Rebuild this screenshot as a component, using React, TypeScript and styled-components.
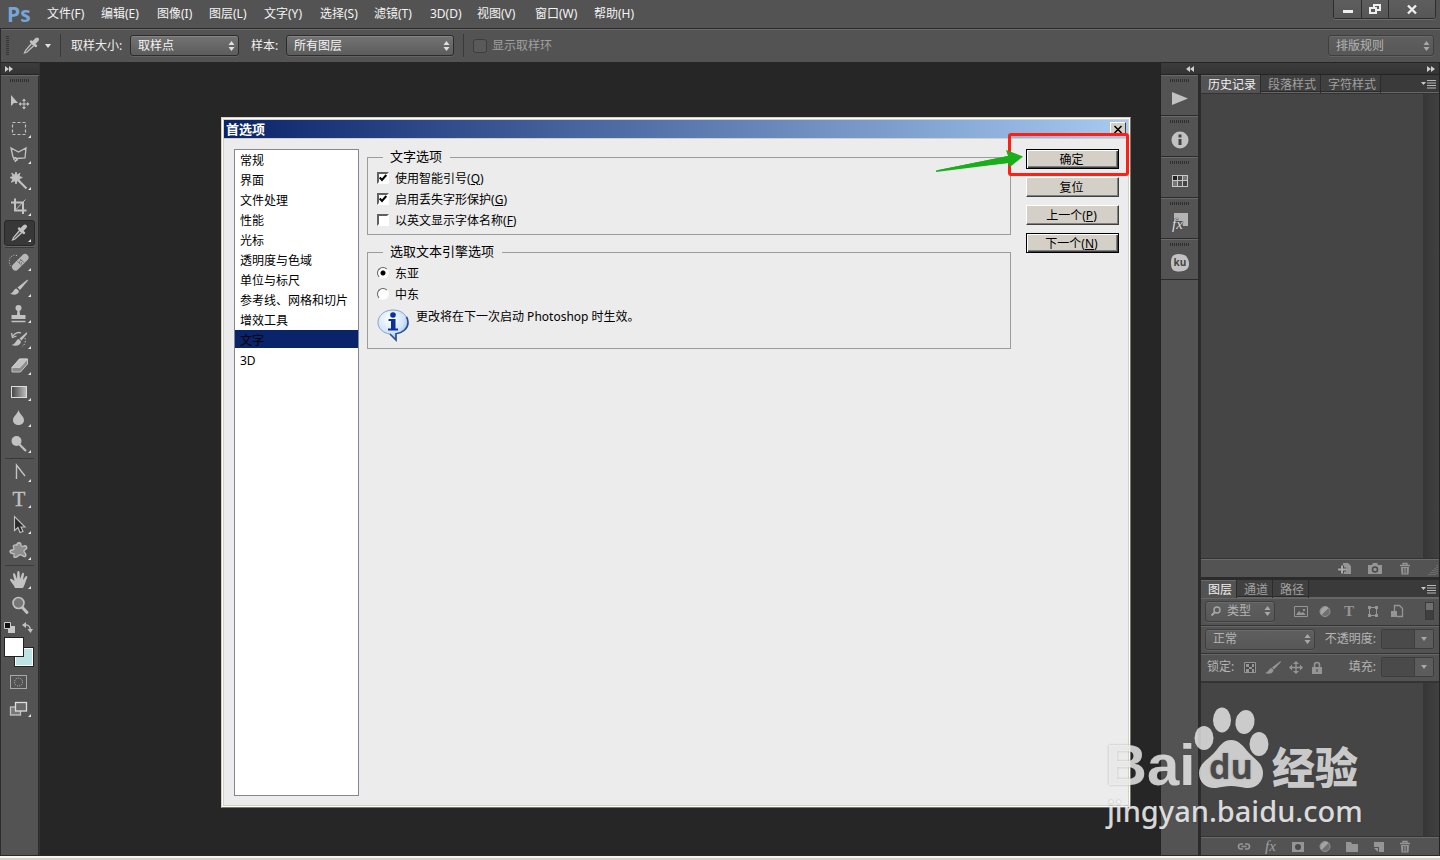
import React from "react";
import styled, { createGlobalStyle, css } from "styled-components";

const UI_FONT = '"Noto Sans", "Noto Sans CJK SC", sans-serif';

const GlobalStyle = createGlobalStyle`
  * { box-sizing: border-box; }
  body { margin: 0; background: #262626; font: 12px/16px ${UI_FONT}; }
  button, select, input { font: inherit; margin: 0; }
  svg { display: block; overflow: visible; }
  ul { list-style: none; margin: 0; padding: 0; }
`;

/* ---------- frame ---------- */
const Frame = styled.div`
  position: relative;
  display: flex;
  flex-direction: column;
  min-height: 100vh;
  color: #f0f0f0;
  background: #262626;
`;
const Bar = styled.header`
  display: flex;
  align-items: center;
  background: #535353;
`;
const MenuBar = styled(Bar)`
  height: 28px;
  padding: 0 4px 0 7px;
`;
const Logo = styled.span`
  width: 40px;
  font: bold 21px/24px "Open Sans", sans-serif;
  color: #77a5d8;
`;
const Menus = styled.nav`
  flex: 1;
  display: grid;
  grid-template-columns: 54px 56px 52px 55px 56px 54px 56px 47px 58px 59px 60px;
`;
const MenuButton = styled.button`
  padding: 0;
  border: 0;
  background: none;
  color: #f4f4f4;
  text-align: left;
  white-space: nowrap;
`;
const WindowButtons = styled.div`
  align-self: flex-start;
  display: flex;
  border: 1px solid #2d2d2d;
  border-top: 0;
  border-radius: 0 0 3px 3px;
  box-shadow: 0 1px 0 #6c6c6c;
`;
const WindowButton = styled.button<{ $width: number }>`
  display: flex;
  align-items: center;
  justify-content: center;
  width: ${(p) => p.$width}px;
  height: 18px;
  padding: 0;
  border: 0;
  border-left: 1px solid #2d2d2d;
  background: linear-gradient(#5e5e5e, #565656);
  &:first-child { border-left: 0; }
`;
const OptionsBar = styled(Bar)`
  height: 34px;
  padding: 0 6px 0 5px;
  border-top: 1px solid #2b2b2b;
  border-left: 1px solid #2b2b2b;
  box-shadow: inset 0 1px 0 #6a6a6a;
`;
const VerticalGrip = styled.i`
  width: 3px;
  height: 20px;
  margin-right: 10px;
  background: repeating-linear-gradient(#333 0 1px, transparent 1px 2px);
`;
const IconButton = styled.button`
  display: flex;
  align-items: center;
  justify-content: center;
  padding: 0;
  border: 0;
  background: none;
`;
const Divider = styled.i`
  width: 1px;
  height: 23px;
  margin: 0 9px;
  background: #3a3a3a;
`;
const OptionLabel = styled.label`
  margin: 0 4px 0 1px;
  min-width: 55px;
`;
const ShortLabel = styled(OptionLabel)`
  min-width: 31px;
  margin-left: 12px;
`;
const CheckOption = styled.label`
  display: flex;
  align-items: center;
  gap: 5px;
  color: #a0a0a0;
`;
const DarkCheck = styled.input`
  appearance: none;
  width: 14px;
  height: 14px;
  border: 1px solid #3d3d3d;
  border-radius: 3px;
  background: #5a5a5a;
`;
const Spacer = styled.span`
  flex: 1;
`;
const SelectBox = styled.span<{ $width: number; $dim?: boolean; $icon?: boolean }>`
  display: grid;
  width: ${(p) => p.$width}px;
  height: 21px;
  align-items: center;
  color: ${(p) => (p.$dim ? "#b4b4b4" : "#f4f4f4")};
  > * { grid-area: 1 / 1; }
  > svg:last-child { justify-self: end; margin-right: 4px; pointer-events: none; }
  > svg:first-of-type:not(:last-child) { margin-left: 6px; z-index: 1; }
  select {
    appearance: none;
    width: 100%;
    height: 21px;
    padding: 0 16px 0 ${(p) => (p.$icon ? 21 : 7)}px;
    border: 1px solid ${(p) => (p.$dim ? "#3f3f3f" : "#2c2c2c")};
    border-radius: 3px;
    background: ${(p) =>
      p.$dim ? "linear-gradient(#5f5f5f, #575757)" : "linear-gradient(#737373, #5c5c5c)"};
    box-shadow: inset 0 1px 0 ${(p) => (p.$dim ? "#6a6a6a" : "#858585")}, 0 1px 0 #626262;
    color: inherit;
  }
`;

/* ---------- workspace ---------- */
const Workspace = styled.div`
  flex: 1;
  display: flex;
`;
const CollapseStrip = styled.div`
  display: flex;
  align-items: center;
  justify-content: space-between;
  height: 13px;
  padding: 0 4px;
  border: solid #242424;
  border-width: 1px 0;
  background: linear-gradient(#3c3c3c, #343434);
`;
const ToolColumn = styled.aside`
  width: 40px;
  border-left: 1px solid #2b2b2b;
  border-right: 1px solid #343434;
  background: #535353;
  box-shadow: inset -1px 0 0 #2b2b2b;
`;
const Grip = styled.i`
  display: block;
  width: 20px;
  height: 3px;
  margin: 0 auto;
  background: repeating-linear-gradient(90deg, #2f2f2f 0 1px, transparent 1px 2px);
`;
const ToolGrip = styled.div`
  height: 15px;
  padding-top: 4px;
  padding-right: 1px;
  box-shadow: inset 0 1px 0 #6a6a6a;
`;
const ToolButton = styled.button<{ $active?: boolean }>`
  display: block;
  width: 31px;
  height: 26px;
  margin-left: 3px;
  padding: 1px 0 1px 2px;
  border: 1px solid transparent;
  border-radius: 3px;
  background: none;
  ${(p) =>
    p.$active &&
    css`
      border-color: #282828;
      background: #383838;
      box-shadow: 0 1px 0 #666;
    `}
`;
const ToolRule = styled.i`
  display: block;
  height: 1px;
  margin: 1px 5px 1px 4px;
  background: #3a3a3a;
`;
const SwatchRow = styled.div`
  display: flex;
  justify-content: space-between;
  padding: 3px 6px 0 3px;
`;
const Swatches = styled.div`
  display: grid;
  grid-template: repeat(3, 10px) / 10px 10px 10px;
  margin: 4px 0 2px 3px;
`;
const Swatch = styled.button<{ $color: string; $back?: boolean }>`
  grid-area: ${(p) => (p.$back ? "2 / 2 / 4 / 4" : "1 / 1 / 3 / 3")};
  z-index: ${(p) => (p.$back ? 0 : 1)};
  padding: 0;
  border: 1px solid #222;
  background: ${(p) => p.$color};
  box-shadow: inset 0 0 0 1px #fff;
`;
const Canvas = styled.main`
  flex: 1;
  display: flex;
  padding: 55px 29px 47px 181px;
  background: #262626;
`;
const StatusEdge = styled.footer`
  height: 5px;
  border-top: 1px solid #2a2a2a;
  background: linear-gradient(#f8f6f0 0 2px, #d4d0c8 2px);
`;

/* ---------- preferences dialog ---------- */
const Dialog = styled.section`
  position: relative;
  flex: 1;
  display: flex;
  flex-direction: column;
  padding: 1px;
  border: 1px solid #d4d0c8;
  border-right-color: #77776c;
  border-bottom-color: #77776c;
  background: #ececec;
  box-shadow: inset 0 0 0 1px #fff, inset 0 0 0 2px #d4d0c8;
  color: #000;
`;
const TitleBar = styled.div`
  display: flex;
  align-items: center;
  justify-content: space-between;
  height: 18px;
  margin: 1px;
  padding: 0 2px;
  background: linear-gradient(90deg, #0a246a, #a6caf0);
  box-shadow: 0 1px 0 #d4d0c8;
`;
const Title = styled.h1`
  margin: 0;
  font-size: 13px;
  line-height: 18px;
  color: #fff;
`;
const CloseButton = styled.button`
  display: flex;
  align-items: center;
  justify-content: center;
  width: 16px;
  height: 14px;
  padding: 0;
  border: 1px solid;
  border-color: #fff #404040 #404040 #fff;
  background: #d4d0c8;
`;
const DialogBody = styled.div`
  flex: 1;
  display: flex;
  padding: 10px 10px 10px 11px;
`;
const CategoryList = styled.ul`
  && { margin-right: 8px; }
  width: 125px;
  border: 1px solid #828790;
  background: #fff;
`;
const Category = styled.li<{ $selected?: boolean }>`
  height: 18px;
  margin-bottom: 2px;
  padding-left: 5px;
  line-height: 22px;
  background: ${(p) => (p.$selected ? "#0a246a" : "transparent")};
`;
const Settings = styled.div`
  flex: 1;
`;
const Group = styled.fieldset`
  margin: 0 0 9px;
  padding: 3px 9px 3px;
  border: 1px solid #9c9c9c;
`;
const GroupTitle = styled.legend`
  margin-left: 6px;
  padding: 0 8px 2px 7px;
  font-size: 13px;
  line-height: 14px;
`;
const Choice = styled.label`
  display: flex;
  align-items: center;
  gap: 6px;
  height: 21px;
  u { text-underline-offset: 1px; }
  > input, > span:first-child:not(:last-child) { margin-bottom: 2px; }
`;
const CheckMark = styled.input`
  appearance: none;
  width: 12px;
  height: 12px;
  border: 2px solid;
  border-color: #606060 #fff #fff #606060;
  background: #fff;
`;
const CheckCell = styled.span`
  display: grid;
  place-items: center;
  > * { grid-area: 1 / 1; }
  svg { pointer-events: none; }
`;
const Radio = styled.input`
  appearance: none;
  width: 12px;
  height: 12px;
  border: 1px solid;
  border-color: #606060 #fafafa #fafafa #606060;
  border-radius: 50%;
  background: #fff;
  &:checked { background: radial-gradient(circle, #000 0 2px, #fff 3px); }
`;
const Notice = styled.p`
  display: flex;
  gap: 7px;
  margin: 0;
  padding: 4px 0;
  line-height: 16px;
`;
const ActionColumn = styled.div`
  display: flex;
  flex-direction: column;
  gap: 8px;
  width: 93px;
  margin-left: 15px;
`;
const ActionButton = styled.button<{ $strong?: boolean }>`
  height: 20px;
  padding: 1px 2px 0 0;
  border: 1px solid;
  border-color: ${(p) => (p.$strong ? "#000" : "#fff #404040 #404040 #fff")};
  background: #d4d0c8;
  box-shadow: ${(p) =>
    p.$strong ? "inset 1px 1px 0 #fff, inset -1px -1px 0 #404040, inset -2px -2px 0 #808080" : "inset -1px -1px 0 #808080"};
  color: #000;
  line-height: 18px;
`;
const CalloutBox = styled.div`
  position: absolute;
  top: 15px;
  right: 1px;
  width: 121px;
  height: 43px;
  border: 3px solid #ff2013;
  border-radius: 3px;
  pointer-events: none;
`;
const CalloutArrow = styled.svg`
  position: absolute;
  top: 30px;
  right: 105px;
  pointer-events: none;
`;

/* ---------- right docks ---------- */
const RightArea = styled.aside`
  display: flex;
  flex-direction: column;
  width: 280px;
  border: solid #242424;
  border-width: 0 1px;
  background: #535353;
`;
const RightStrip = styled(CollapseStrip)`
  padding: 0 4px 0 25px;
`;
const DockRow = styled.div`
  flex: 1;
  display: flex;
`;
const IconDock = styled.div`
  width: 40px;
  border-right: 3px solid #2b2b2b;
  background: #535353;
`;
const DockButton = styled.button`
  display: flex;
  flex-direction: column;
  align-items: center;
  width: 100%;
  height: 41px;
  padding: 4px 0 0;
  border: 0;
  border-bottom: 1px solid #2b2b2b;
  background: none;
  box-shadow: inset 0 1px 0 #6a6a6a;
`;
const DockIcon = styled.span`
  flex: 1;
  display: flex;
  align-items: center;
`;
const Panels = styled.div`
  flex: 1;
  display: flex;
  flex-direction: column;
`;
const Tabs = styled.div`
  display: flex;
  height: 18px;
  background: #3a3a3a;
  box-shadow: inset 0 -1px 0 #666;
`;
const Tab = styled.button<{ $active?: boolean }>`
  padding: 1px 4px 0 7px;
  border: 0;
  border-right: 1px solid #2b2b2b;
  background: ${(p) => (p.$active ? "#535353" : "#404040")};
  box-shadow: ${(p) => (p.$active ? "inset 0 1px 0 #6a6a6a" : "inset 0 -1px 0 #666, inset 0 -2px 0 #2b2b2b")};
  color: ${(p) => (p.$active ? "#f0f0f0" : "#a0a0a0")};
  white-space: nowrap;
`;
const PanelMenu = styled(IconButton)`
  margin-left: auto;
  padding-right: 3px;
`;
const ListArea = styled.div<{ $height?: number }>`
  flex: ${(p) => (p.$height ? `0 0 ${p.$height}px` : "1")};
  border-top: 1px solid #333;
  border-bottom: 1px solid #333;
  background: linear-gradient(90deg, #363636, #414141) right / 16px 100% no-repeat #454545;
`;
const PanelFooter = styled.div<{ $pad: number; $gap: number }>`
  display: flex;
  align-items: center;
  justify-content: flex-end;
  gap: ${(p) => p.$gap}px;
  height: 18px;
  padding: 1px ${(p) => p.$pad}px 0 0;
  box-shadow: inset 0 1px 0 #6a6a6a;
`;
const PanelGap = styled.div`
  height: 3px;
  background: #2b2b2b;
`;
const LayerRow = styled.div`
  display: flex;
  align-items: center;
  height: 28px;
  padding: 0 5px 1px 4px;
  border-bottom: 1px solid #343434;
  box-shadow: inset 0 1px 0 #666;
  color: #b4b4b4;
`;
const LockLabel = styled.span`
  padding-left: 2px;
`;
const RowIcons = styled.div<{ $gap: number; $left: number }>`
  display: flex;
  align-items: center;
  gap: ${(p) => p.$gap}px;
  margin-left: ${(p) => p.$left}px;
`;
const FilterSwitch = styled.input`
  appearance: none;
  width: 9px;
  height: 18px;
  && { margin-left: auto; }
  border: 1px solid #3a3a3a;
  background: linear-gradient(#707070 0 7px, #3f3f3f 7px);
`;
const ValueLabel = styled.label`
  display: flex;
  align-items: center;
  gap: 5px;
  margin-left: auto;
`;
const ValueField = styled.span`
  display: flex;
  width: 53px;
  height: 20px;
  border: 1px solid #3d3d3d;
  border-radius: 2px;
  input {
    width: 32px;
    min-width: 0;
    border: 0;
    padding: 0 2px;
    background: #4a4a4a;
    color: inherit;
  }
  button { flex: 1; background: #5c5c5c; border-left: 1px solid #3d3d3d; }
`;

/* ---------- watermark ---------- */
const Watermark = styled.div`
  position: absolute;
  right: 77px;
  bottom: 30px;
  width: 258px;
  color: rgba(255, 255, 255, 0.74);
  text-shadow: 0 0 2px rgba(60, 60, 60, 0.4);
  pointer-events: none;
`;
const Wordmark = styled.div`
  display: flex;
  align-items: flex-end;
  height: 86px;
`;
const Bai = styled.span`
  width: 90px;
  font: bold 58px/54px "Liberation Sans", sans-serif;
`;
const Jingyan = styled.span`
  margin-left: 3px;
  font: 900 43px/54px "Noto Sans CJK SC", sans-serif;
`;
const Domain = styled.div`
  padding-left: 2px;
  font: 500 29px/38px "Noto Sans", sans-serif;
  color: rgba(255, 255, 255, 0.82);
`;

/* ---------- icons ---------- */
const C = "#c2c2c2";
const TOOL_ART: Record<string, React.ReactNode> = {
  move: (
    <>
      <path d="M4 3v11l3-3h4z" fill={C} />
      <path d="M17 8v8M13 12h8" stroke={C} />
      <path d="M17 6.500l-2 2.500h4zM17 17.500l-2-2.500h4zM11.500 12l2.500-2v4zM22.500 12l-2.500-2v4z" fill={C} />
    </>
  ),
  marquee: <rect x="5.500" y="4.500" width="13" height="12" fill="none" stroke={C} strokeDasharray="3 2" strokeWidth="1.200" />,
  lasso: (
    <path d="M8 18l2-3-4-2-2-9 7.500 4 7.500-4-1 10-8 .500c-2.500-2-4.500 0-2.500 1.500 2 1 3.500 0 2.500-1.500" fill="none" stroke={C} strokeWidth="1.300" />
  ),
  wand: (
    <>
      <path d="M9 2l1 3.200 3-2-1.200 3.200 3.500 1.100-3.500 1.300 1.500 3.200-3.200-1.500L9 14l-1.200-3.500-3.300 1.700 1.600-3.400L3 7.500l3.200-1-1.500-3.300 3.200 2z" fill={C} stroke={C} />
      <path d="M11.500 10.500l8 8" stroke={C} strokeWidth="2.200" />
    </>
  ),
  crop: (
    <>
      <path d="M8 2.500v12h11.500M4 6.500h12V18" fill="none" stroke={C} strokeWidth="2" />
      <path d="M8 14.500l10.500-11" stroke={C} />
    </>
  ),
  eyedropper: (
    <>
      <path d="M13 8l-6.500 7.500-1 2.500 2.500-1L15.500 10" fill="#555" stroke={C} strokeWidth="1.200" />
      <path d="M12 6.500l5 4.500" stroke={C} strokeWidth="2.400" strokeLinecap="round" />
      <path d="M14.500 8L18 4.500" stroke={C} strokeWidth="4" strokeLinecap="round" />
    </>
  ),
  heal: (
    <>
      <path d="M8.500 16L18 6.500" stroke="#b8b8b8" strokeWidth="7" strokeLinecap="round" />
      <path d="M10.500 10.500l4.500 4M13 8l4.500 4" stroke="#7a7a7a" />
      <path d="M12 11h1M14 12h1M13.500 9.500h1" stroke="#444" />
      <path d="M10 4.500C4 3 1.500 8 2.500 12.500 3 14 3.500 15 4 15.500" fill="none" stroke={C} strokeDasharray="1 1.500" />
    </>
  ),
  brush: (
    <>
      <path d="M20.500 2.500l-10 8 2.500 2.500 8-9.500z" fill={C} />
      <path d="M9.500 11.500c-3 0-2.500 4.500-6.500 5 3 2 8.500 1.500 9-2.500z" fill={C} />
    </>
  ),
  stamp: (
    <>
      <circle cx="11.500" cy="5" r="3" fill={C} />
      <path d="M10.500 7h2l.500 5h5.500v4H4.500v-4H10z" fill={C} />
      <path d="M4.500 18.500h14" stroke={C} strokeWidth="1.500" />
    </>
  ),
  history: (
    <>
      <path d="M20 3l-7.500 6.500 2 2L20 5z" fill={C} />
      <path d="M12 10c-3 0-3 5-7.500 6 3.500 1.500 9 1 9.500-3.500z" fill={C} />
      <path d="M6 7c2-3.500 6-4 8-3M4.500 4l1 4.500 4-1.500" fill="none" stroke={C} strokeWidth="1.300" />
      <path d="M18 9c1 3 0 7-3 8.500" fill="none" stroke={C} strokeDasharray="1.500 1.500" />
    </>
  ),
  eraser: (
    <>
      <path d="M5 12.500L12.500 4H20.500v5l-7 8H5z" fill="#8c8c8c" stroke={C} />
      <path d="M5 12.500L12.500 4H20.500l-7.500 8.500z" fill={C} stroke="#ddd" strokeWidth=".6" />
    </>
  ),
  gradient: (
    <rect x="4.500" y="5.500" width="15" height="11" fill="url(#toolGradient)" stroke="#dcdcdc" />
  ),
  drop: <path d="M11.500 3c1 4 5.500 6.500 5.500 10 0 3.200-2.500 5-5.500 5S6 16.200 6 13c0-3.500 4.500-6 5.500-10z" fill={C} />,
  dodge: (
    <>
      <circle cx="9.500" cy="8" r="5" fill={C} />
      <path d="M12.500 11.500l6.500 6.500" stroke={C} strokeWidth="2.200" />
    </>
  ),
  pen: <path d="M9.500 17V3l8.500 11" fill="none" stroke={C} strokeWidth="1.400" />,
  type: (
    <text x="12" y="18" textAnchor="middle" fontFamily='"Liberation Serif", serif' fontSize="21" fill={C} stroke={C} strokeWidth=".4">
      T
    </text>
  ),
  select: (
    <path d="M7.500 2.500v14l3.500-3 2 5 3-1-2-4.500h4z" fill="#2a2a2a" stroke={C} strokeWidth="1.100" />
  ),
  shape: (
    <path d="M10 5c0-3 4-3 4 0 0 1.500 1 1.500 2.500 1 3-1 4.500 2 2 3.500-2 1.200-2 2-.500 3.500 2 2.500 0 4.500-2 3-2-1.500-3.500-1.500-5 0-2 2-5 2-4-.500 .500-1.500 0-2-1.500-2-3 0-3.500-3-.500-3.500 2-.300 2.500-.800 1.500-2.500-1-2 1-3 3.500-2.500z" fill="#8e8e8e" stroke={C} strokeWidth="1.300" />
  ),
  hand: (
    <path d="M8 19c-1-3-4-6-5-8 0-1.500 1.500-1.500 2.500-.500L7.500 12 6 5.500c0-1.500 1.700-1.700 2.200-.300L10 10l.300-7c.2-1.500 2-1.500 2.200 0L13 10l2-5.500c.7-1.300 2.200-.700 2 .700L16 11l2.500-3.500c1-1 2.300 0 1.700 1.300C18.500 12 18 16 16 19z" fill={C} />
  ),
  zoom: (
    <>
      <path d="M15 12l5 5.500" stroke={C} strokeWidth="3" strokeLinecap="round" />
      <circle cx="11.500" cy="8" r="5.500" fill="#777" stroke={C} strokeWidth="1.600" />
    </>
  ),
  mask: (
    <>
      <rect x="3.500" y="4.500" width="16" height="13" fill="none" stroke="#a8a8a8" />
      <circle cx="11.500" cy="11" r="4" fill="none" stroke={C} strokeDasharray="1 1.200" />
    </>
  ),
  screen: (
    <>
      <rect x="3.500" y="10" width="10" height="8" fill="#777" stroke={C} strokeWidth="1.300" />
      <rect x="8.500" y="5.500" width="11" height="8.500" fill="#6a6a6a" stroke="#ddd" strokeWidth="1.300" />
    </>
  ),
};

const ToolIcon = ({ name, corner = true }: { name: string; corner?: boolean }) => (
  <svg width="26" height="22" viewBox="0 0 26 22" aria-hidden="true">
    <defs>
      <linearGradient id="toolGradient">
        <stop offset="0" stopColor="#444" />
        <stop offset="1" stopColor="#c0c0c0" />
      </linearGradient>
    </defs>
    {TOOL_ART[name]}
    {corner && <path d="M24 17v3h-3z" fill="#e6e6e6" />}
  </svg>
);

const UpDown = ({ color }: { color: string }) => (
  <svg width="7" height="10" viewBox="0 0 7 10" aria-hidden="true">
    <path d="M3.500 0L6.500 4h-6zM3.500 10L.5 6h6z" fill={color} />
  </svg>
);
const Caret = ({ color }: { color: string }) => (
  <svg width="6" height="4" viewBox="0 0 6 4" aria-hidden="true">
    <path d="M0 0h6L3 4z" fill={color} />
  </svg>
);
const Chevrons = ({ left }: { left?: boolean }) => (
  <svg width="8" height="6" viewBox="0 0 8 6" aria-hidden="true">
    <path d={left ? "M4 0v6L0 3zM8 0v6L4 3z" : "M0 0v6l4-3zM4 0v6l4-3z"} fill="#cfcfcf" />
  </svg>
);
const MenuGlyph = () => (
  <svg width="15" height="9" viewBox="0 0 15 9" aria-hidden="true">
    <path d="M0 2h5L2.500 5z" fill="#c8c8c8" />
    <path d="M6 .5h9M6 3h9M6 5.500h9M6 8h9" stroke="#b8b8b8" />
  </svg>
);
const Small = ({ children, w = 14 }: { children: React.ReactNode; w?: number }) => (
  <svg width={w} height="13" viewBox={`0 0 ${w} 13`} aria-hidden="true">
    {children}
  </svg>
);
const S = "#959595";
const TrashIcon = () => (
  <Small w={12}>
    <path d="M1 3.500h10M4 3V1.500h4V3" fill="none" stroke={S} strokeWidth="1.300" />
    <path d="M2 5h8l-.5 7.500h-7z" fill={S} />
    <path d="M4.500 6v5.500M6 6v5.500M7.500 6v5.500" stroke="#4c4c4c" strokeWidth=".7" />
  </Small>
);
const HalfCircle = () => (
  <Small w={12}>
    <circle cx="6" cy="6.500" r="5" fill="#707070" stroke={S} />
    <path d="M2.500 10L9.500 3A5 5 0 0 0 2.500 10z" fill="#a4a4a4" />
  </Small>
);
const BrushSmall = () => (
  <Small w={16}>
    <path d="M15.500 0L7 6.500l2 2L16 1z" fill={S} />
    <path d="M6.500 7C4 7 4 11 0 12c3 1.500 8 1 8.500-3z" fill={S} />
  </Small>
);

const DOCK_ICONS: [string, React.ReactNode][] = [
  ["动作", <svg width="18" height="18" viewBox="0 0 18 18"><path d="M1 2l16 6.500L1 15z" fill={C} /></svg>],
  [
    "信息",
    <svg width="18" height="18" viewBox="0 0 18 18">
      <circle cx="9" cy="9" r="8.500" fill={C} />
      <path d="M7.500 8h3v6h-3zM7.500 3.500h3v3h-3z" fill="#444" />
    </svg>,
  ],
  [
    "色板",
    <svg width="18" height="14" viewBox="0 0 18 14">
      <path d="M1 1h16v12H1z" fill="#c8c8c8" />
      <path d="M2 2h4v4H2z" fill="#222" />
      <path d="M7 2h4v4H7zM12 7h4v5h-4z" fill="#444" />
      <path d="M12 2h4v4h-4zM2 7h4v5H2z" fill="#777" />
      <path d="M7 7h4v5H7z" fill="#555" />
    </svg>,
  ],
  [
    "样式",
    <svg width="20" height="22" viewBox="0 0 20 22">
      <path d="M4 2h14v13h-5l-1-5H4z" fill="#b4b4b4" />
      <text x="2" y="18" fontFamily='"Liberation Serif", serif' fontStyle="italic" fontSize="15" fill="#dcdcdc" stroke="#505050" strokeWidth="1" paintOrder="stroke">
        fx
      </text>
    </svg>,
  ],
  [
    "Kuler",
    <svg width="20" height="20" viewBox="0 0 20 20">
      <path d="M4 2c4-2 9-1 12 1 3 3 4 9 2 12-3 4-9 4-13 3C1 17 1 12 1 9c0-3 1-6 3-7z" fill={C} />
      <text x="10" y="13" textAnchor="middle" fontFamily='"Open Sans", sans-serif' fontWeight="bold" fontSize="10" fill="#444">
        ku
      </text>
    </svg>,
  ],
];

const MENUS = ["文件(F)", "编辑(E)", "图像(I)", "图层(L)", "文字(Y)", "选择(S)", "滤镜(T)", "3D(D)", "视图(V)", "窗口(W)", "帮助(H)"];
const TOOL_GROUPS: [string, string][][] = [
  [["move", "移动"], ["marquee", "选框"], ["lasso", "套索"], ["wand", "魔棒"], ["crop", "裁剪"], ["eyedropper", "吸管"]],
  [["heal", "修复画笔"], ["brush", "画笔"], ["stamp", "图章"], ["history", "历史画笔"], ["eraser", "橡皮擦"], ["gradient", "渐变"], ["drop", "模糊"], ["dodge", "减淡"]],
  [["pen", "钢笔"], ["type", "横排文字"], ["select", "路径选择"], ["shape", "自定形状"]],
  [["hand", "抓手"], ["zoom", "缩放"]],
];
const CATEGORIES = ["常规", "界面", "文件处理", "性能", "光标", "透明度与色域", "单位与标尺", "参考线、网格和切片", "增效工具", "文字", "3D"];
const CHECKS: [string, string, boolean][] = [
  ["使用智能引号", "Q", true],
  ["启用丢失字形保护", "G", true],
  ["以英文显示字体名称", "F", false],
];

const Picker = ({ id, value, width, dim, icon, label }: { id: string; value: string; width: number; dim?: boolean; icon?: React.ReactNode; label?: string }) => (
  <SelectBox $width={width} $dim={dim} $icon={!!icon}>
    {icon}
    <select id={id} aria-label={label} defaultValue={value}>
      <option>{value}</option>
    </select>
    <UpDown color={dim ? "#a8a8a8" : "#e0e0e0"} />
  </SelectBox>
);

const PreferencesDialog = () => (
  <Dialog role="dialog" aria-labelledby="prefs-title">
    <TitleBar>
      <Title id="prefs-title">首选项</Title>
      <CloseButton aria-label="关闭">
        <svg width="8" height="7" viewBox="0 0 8 7">
          <path d="M.5 0l7 7M7.500 0l-7 7" stroke="#000" strokeWidth="1.600" />
        </svg>
      </CloseButton>
    </TitleBar>
    <DialogBody>
      <CategoryList>
        {CATEGORIES.map((c) => (
          <Category key={c} $selected={c === "文字"}>{c}</Category>
        ))}
      </CategoryList>
      <Settings>
        <Group>
          <GroupTitle>文字选项</GroupTitle>
          {CHECKS.map(([text, key, on]) => (
            <Choice key={key}>
              <CheckCell>
                <CheckMark type="checkbox" defaultChecked={on} />
                {on && (
                  <svg width="8" height="8" viewBox="0 0 8 8">
                    <path d="M.7 3.500l2.300 2.500 4.300-5" fill="none" stroke="#000" strokeWidth="2" />
                  </svg>
                )}
              </CheckCell>
              <span>{text}(<u>{key}</u>)</span>
            </Choice>
          ))}
        </Group>
        <Group>
          <GroupTitle>选取文本引擎选项</GroupTitle>
          <Choice><Radio type="radio" name="engine" defaultChecked />东亚</Choice>
          <Choice><Radio type="radio" name="engine" />中东</Choice>
          <Notice>
            <svg width="32" height="32" viewBox="0 0 32 32" aria-hidden="true">
              <defs>
                <radialGradient id="bubble" cx=".4" cy=".3" r=".8">
                  <stop offset="0" stopColor="#fff" />
                  <stop offset=".6" stopColor="#cfe3f8" />
                  <stop offset="1" stopColor="#6f9fdc" />
                </radialGradient>
              </defs>
              <path d="M16 1C7.500 1 1 6.500 1 13.500c0 6 5 10.500 12 11.500l6 6v-6.200c7-1 12-5.300 12-11.300C31 6.500 24.500 1 16 1z" fill="url(#bubble)" stroke="#8aa2c4" />
              <path d="M13 25l6 6v-6.200c7-1 12-5.300 12-11.300 0-2-.5-3.800-1.500-5.500" fill="none" stroke="#2a4f8f" strokeWidth="1.600" />
              <circle cx="16" cy="6" r="2.800" fill="#0b2f9c" />
              <path d="M11.500 10h7v9.500h2.500V21.500H11v-2h3V12h-2.500z" fill="#0b2f9c" />
            </svg>
            更改将在下一次启动 Photoshop 时生效。
          </Notice>
        </Group>
      </Settings>
      <ActionColumn>
        <ActionButton $strong>确定</ActionButton>
        <ActionButton>复位</ActionButton>
        <ActionButton>上一个(<u>P</u>)</ActionButton>
        <ActionButton $strong>下一个(<u>N</u>)</ActionButton>
      </ActionColumn>
    </DialogBody>
    <CalloutBox />
    <CalloutArrow width="90" height="26" viewBox="0 0 90 26" aria-hidden="true">
      <path d="M1 22.500L73 8 71 2l17 6.500L75 19l-2-4z" fill="#1aaf1a" />
      <path d="M1 22.500L73 8v7L1 24z" fill="#1aaf1a" />
    </CalloutArrow>
  </Dialog>
);

const ValueBox = ({ label }: { label: string }) => (
  <ValueLabel>
    {label}
    <ValueField>
      <input type="text" aria-label={label} />
      <IconButton aria-label={label}><Caret color="#a8a8a8" /></IconButton>
    </ValueField>
  </ValueLabel>
);

export default function App() {
  return (
    <Frame>
      <GlobalStyle />
      <MenuBar>
        <Logo>Ps</Logo>
        <Menus>
          {MENUS.map((m) => <MenuButton key={m}>{m}</MenuButton>)}
        </Menus>
        <WindowButtons>
          <WindowButton $width={27} aria-label="最小化">
            <svg width="10" height="10" viewBox="0 0 10 10"><path d="M0 6h10v3H0z" fill="#eee" /></svg>
          </WindowButton>
          <WindowButton $width={27} aria-label="还原">
            <svg width="12" height="10" viewBox="0 0 12 10">
              <path d="M5 1h6v5H5z" fill="none" stroke="#eee" strokeWidth="2" />
              <path d="M1 4h6v5H1z" fill="#5a5a5a" stroke="#eee" strokeWidth="2" />
            </svg>
          </WindowButton>
          <WindowButton $width={47} aria-label="关闭窗口">
            <svg width="10" height="9" viewBox="0 0 10 9"><path d="M1 .5l8 8M9 .5l-8 8" stroke="#eee" strokeWidth="2.400" /></svg>
          </WindowButton>
        </WindowButtons>
      </MenuBar>

      <OptionsBar as="div">
        <VerticalGrip />
        <IconButton aria-label="吸管预设"><ToolIcon name="eyedropper" corner={false} /><Caret color="#e0e0e0" /></IconButton>
        <Divider />
        <OptionLabel htmlFor="size">取样大小:</OptionLabel>
        <Picker id="size" value="取样点" width={109} />
        <ShortLabel htmlFor="sample">样本:</ShortLabel>
        <Picker id="sample" value="所有图层" width={168} />
        <Divider />
        <CheckOption><DarkCheck type="checkbox" />显示取样环</CheckOption>
        <Spacer />
        <Picker id="workspace" label="工作区" value="排版规则" width={106} dim />
      </OptionsBar>

      <Workspace>
        <ToolColumn>
          <CollapseStrip><Chevrons /></CollapseStrip>
          <ToolGrip><Grip /></ToolGrip>
          {TOOL_GROUPS.map((group, i) => (
            <React.Fragment key={i}>
              {i > 0 && <ToolRule />}
              {group.map(([name, label]) => (
                <ToolButton key={name} aria-label={label} $active={name === "eyedropper"}>
                  <ToolIcon name={name} corner={name !== "move" && name !== "zoom"} />
                </ToolButton>
              ))}
            </React.Fragment>
          ))}
          <SwatchRow>
            <IconButton aria-label="默认颜色">
              <svg width="11" height="11" viewBox="0 0 11 11">
                <path d="M4 4h7v7H4z" fill="#c8c8c8" />
                <path d="M.5 .5h6v6h-6z" fill="#111" stroke="#ccc" />
              </svg>
            </IconButton>
            <IconButton aria-label="切换颜色">
              <svg width="11" height="11" viewBox="0 0 11 11">
                <path d="M2.500 3C6 2.500 8 4.500 8.500 8" fill="none" stroke={C} strokeWidth="1.400" />
                <path d="M0 3l4-3v6zM8.500 11l-3-4h5.500z" fill={C} />
              </svg>
            </IconButton>
          </SwatchRow>
          <Swatches>
            <Swatch $color="#fff" aria-label="前景色" />
            <Swatch $color="#bde3e2" $back aria-label="背景色" />
          </Swatches>
          <ToolButton aria-label="快速蒙版"><ToolIcon name="mask" corner={false} /></ToolButton>
          <ToolButton aria-label="屏幕模式"><ToolIcon name="screen" /></ToolButton>
        </ToolColumn>

        <Canvas><PreferencesDialog /></Canvas>

        <RightArea>
          <RightStrip><Chevrons left /><Chevrons /></RightStrip>
          <DockRow>
            <IconDock>
              {DOCK_ICONS.map(([label, art]) => (
                <DockButton key={label} aria-label={label}>
                  <Grip />
                  <DockIcon>{art}</DockIcon>
                </DockButton>
              ))}
            </IconDock>
            <Panels>
              <Tabs>
                <Tab $active>历史记录</Tab>
                <Tab>段落样式</Tab>
                <Tab>字符样式</Tab>
                <PanelMenu aria-label="面板菜单"><MenuGlyph /></PanelMenu>
              </Tabs>
              <ListArea />
              <PanelFooter $gap={17} $pad={1}>
                <IconButton aria-label="新建文档">
                  <Small>
                    <path d="M6 1h5l3 3v8H6z" fill={S} />
                    <path d="M1 7.500h8M5 3.500v8" stroke="#4a4a4a" strokeWidth="4" />
                    <path d="M1 7.500h8M5 3.500v8" stroke="#aaa" strokeWidth="2" />
                  </Small>
                </IconButton>
                <IconButton aria-label="新建快照">
                  <Small>
                    <path d="M0 3h4l1-2h4l1 2h4v9H0z" fill={S} />
                    <circle cx="7" cy="7.500" r="2.500" fill={S} stroke="#4a4a4a" strokeWidth="1.500" />
                  </Small>
                </IconButton>
                <IconButton aria-label="删除状态"><TrashIcon /></IconButton>
                <Small w={10}>
                  <path d="M9 3v10M7 6v7M5 8v5M3 10v3M1 12v1" stroke="#888" strokeDasharray="1 1" />
                </Small>
              </PanelFooter>
              <PanelGap />
              <Tabs>
                <Tab $active>图层</Tab>
                <Tab>通道</Tab>
                <Tab>路径</Tab>
                <PanelMenu aria-label="面板菜单"><MenuGlyph /></PanelMenu>
              </Tabs>
              <LayerRow>
                <Picker
                  id="kind"
                  label="图层类型"
                  value="类型"
                  width={70}
                  dim
                  icon={
                    <svg width="10" height="10" viewBox="0 0 10 10">
                      <circle cx="6" cy="4" r="3" fill="none" stroke="#a8a8a8" strokeWidth="1.400" />
                      <path d="M4 6L.5 9.500" stroke="#a8a8a8" strokeWidth="1.800" />
                    </svg>
                  }
                />
                <RowIcons $gap={11} $left={19}>
                  <Small>
                    <path d="M.5 1.500h13v10H.5z" fill="none" stroke={S} />
                    <path d="M2 10l3-4 2 2 2-1 3 3z" fill={S} />
                    <path d="M9 4h2v2H9z" fill={S} />
                  </Small>
                  <HalfCircle />
                  <Small>
                    <text x="7" y="11" textAnchor="middle" fontFamily='"Liberation Serif", serif' fontWeight="bold" fontSize="15" fill={S}>T</text>
                  </Small>
                  <Small w={12}>
                    <path d="M2.500 2.500h7v8h-7z" fill="none" stroke={S} />
                    <path d="M1 1h3v3H1zM8 1h3v3H8zM1 9h3v3H1zM8 9h3v3H8z" fill={S} />
                  </Small>
                  <Small>
                    <path d="M4.500 6V.5h5l3 3v8H7" fill="none" stroke={S} strokeWidth="1.300" />
                    <path d="M1 6h6v6H1z" fill={S} />
                  </Small>
                </RowIcons>
                <FilterSwitch type="checkbox" aria-label="图层过滤" />
              </LayerRow>
              <LayerRow>
                <Picker id="blend" label="混合模式" value="正常" width={110} dim />
                <ValueBox label="不透明度:" />
              </LayerRow>
              <LayerRow>
                <LockLabel>锁定:</LockLabel>
                <RowIcons $gap={9} $left={10}>
                  <Small w={12}>
                    <path d="M.5 1.500h11v10H.5z" fill="#484848" stroke={S} />
                    <path d="M2 3h3v3H2zM8 3h2v3H8zM5 6h3v2H5zM2 8h3v3H2zM8 8h2v3H8z" fill={S} />
                  </Small>
                  <BrushSmall />
                  <Small w={12}>
                    <path d="M6 2v9M1 6.500h10" stroke={S} strokeWidth="1.300" />
                    <path d="M6 0l3 3H3zM6 13l3-3H3zM-1 6.500l3-3v6zM13 6.500l-3-3v6z" fill={S} />
                  </Small>
                  <Small w={12}>
                    <path d="M3.500 6V4a2.500 2.500 0 0 1 5 0v2" fill="none" stroke={S} strokeWidth="1.600" />
                    <path d="M1 6h10v7H1z" fill={S} />
                    <path d="M5.500 8h1v3h-1z" fill="#444" />
                  </Small>
                </RowIcons>
                <ValueBox label="填充:" />
              </LayerRow>
              <ListArea $height={155} />
              <PanelFooter $gap={14} $pad={28}>
                <IconButton aria-label="链接图层">
                  <Small>
                    <path d="M6 4H4a2.500 2.500 0 0 0 0 5h2M8 4h2a2.500 2.500 0 0 1 0 5H8M4.500 6.500h5" fill="none" stroke={S} strokeWidth="1.600" />
                  </Small>
                </IconButton>
                <IconButton aria-label="图层样式">
                  <Small w={12}>
                    <text x="0" y="11" fontFamily='"Liberation Serif", serif' fontStyle="italic" fontSize="15" fill="#a0a0a0">fx</text>
                  </Small>
                </IconButton>
                <IconButton aria-label="图层蒙版">
                  <Small>
                    <path d="M1 2h12v10H1z" fill={S} />
                    <circle cx="7" cy="7" r="3" fill="#4a4a4a" />
                  </Small>
                </IconButton>
                <IconButton aria-label="调整图层"><HalfCircle /></IconButton>
                <IconButton aria-label="新建组">
                  <Small><path d="M1 2h5l1 2h6v8H1z" fill={S} /></Small>
                </IconButton>
                <IconButton aria-label="新建图层">
                  <Small w={12}>
                    <path d="M1 2h10v10H6V7H1z" fill={S} />
                    <path d="M1 8h4v4z" fill={S} />
                  </Small>
                </IconButton>
                <IconButton aria-label="删除图层"><TrashIcon /></IconButton>
              </PanelFooter>
            </Panels>
          </DockRow>
        </RightArea>
      </Workspace>
      <StatusEdge />

      <Watermark>
        <Wordmark>
          <Bai>Bai</Bai>
          <svg width="74" height="86" viewBox="0 0 74 86" aria-hidden="true">
            <g fill="#fff" fillOpacity=".72">
              <ellipse cx="9" cy="32" rx="9.500" ry="12" />
              <ellipse cx="27" cy="14" rx="9" ry="12.500" />
              <ellipse cx="50" cy="16" rx="9.500" ry="12" transform="rotate(12 50 16)" />
              <ellipse cx="64" cy="38" rx="9.500" ry="12" />
              <path d="M36 34c8 0 12 6 18 13 7 7 14 11 14 20 0 10-8 16-17 15-6-1-9-2-15-2s-9 1-15 2C12 83 4 77 4 67c0-9 8-13 15-20 6-7 9-13 17-13z" />
            </g>
            <text x="36" y="73" textAnchor="middle" fontFamily='"Open Sans", sans-serif' fontWeight="bold" fontSize="34" fill="#4a4a4a">
              du
            </text>
          </svg>
          <Jingyan>经验</Jingyan>
        </Wordmark>
        <Domain>jingyan.baidu.com</Domain>
      </Watermark>
    </Frame>
  );
}
